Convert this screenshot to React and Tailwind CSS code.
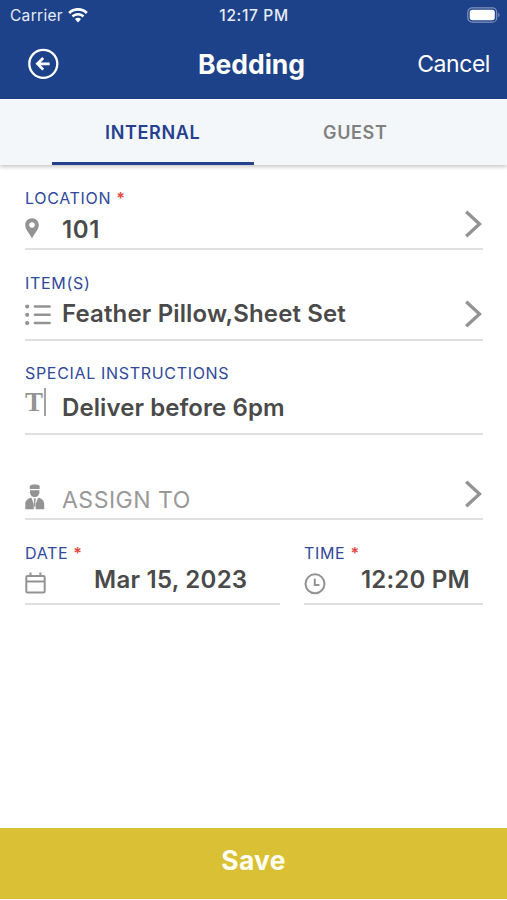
import clsx from 'clsx'

function WifiIcon() {
  return (
    <svg width="20" height="15" viewBox="0 0 20 15" fill="white">
      <path d="M10 0C6.2 0 2.7 1.5 .2 3.9l1.9 2C4.2 4 7 2.8 10 2.8s5.8 1.2 7.9 3.1l1.9-2C17.3 1.5 13.8 0 10 0z" />
      <path d="M10 4.9c-2.5 0-4.7.9-6.4 2.5l1.9 2c1.2-1.1 2.8-1.8 4.5-1.8s3.3.7 4.5 1.8l1.9-2C14.7 5.8 12.5 4.9 10 4.9z" />
      <path d="M10 9.7c-1.2 0-2.2.4-3 1.2l3 3.5 3-3.5c-.8-.8-1.8-1.2-3-1.2z" />
    </svg>
  )
}

function BatteryIcon() {
  return (
    <svg width="34" height="16" viewBox="0 0 34 16">
      <rect x=".8" y=".8" width="28.9" height="14.4" rx="4.5" fill="none" stroke="#8093bc" strokeWidth="1.2" />
      <rect x="2.7" y="2.7" width="25.1" height="10.6" rx="2.8" fill="white" />
      <path d="M31.3 5.8c1.6.6 1.6 3.8 0 4.4z" fill="#8093bc" />
    </svg>
  )
}

function BackIcon() {
  return (
    <svg width="32" height="32" viewBox="0 0 32 32" fill="none" stroke="white" strokeWidth="2.3">
      <circle cx="16.3" cy="15.8" r="14" />
      <path d="M22.6 15.8H10.8M16.2 10l-5.8 5.8 5.8 5.8" strokeWidth="2.7" />
    </svg>
  )
}

function PinIcon() {
  return (
    <svg width="14" height="21" viewBox="0 0 14 21" fill="#939393">
      <path fillRule="evenodd" d="M7 .3C3.2.3.2 3.2.2 7c0 4.8 4.6 8.6 6.8 13.4C9.2 15.6 13.8 11.8 13.8 7 13.800 3.200 10.800.3 7 .3zm0 3.900a2.800 2.800 0 1 1 0 5.600A2.800 2.800 0 0 1 7 4.200z" />
    </svg>
  )
}

function ListIcon() {
  return (
    <svg width="26" height="22" viewBox="0 0 26 22" stroke="#939393" fill="#939393">
      <path d="M9.9 2.500h14.700M9.900 10.800h14.700M9.900 19.100h14.700" strokeWidth="2.500" strokeLinecap="round" />
      <g stroke="none">
        <circle cx="2.200" cy="2.500" r="2.100" />
        <circle cx="2.200" cy="10.800" r="2.100" />
        <circle cx="2.200" cy="19.100" r="2.100" />
      </g>
    </svg>
  )
}

function TextIcon() {
  return (
    <span className="flex h-7 w-[21px] items-center justify-between border-r-2 border-[#a3a3a3] font-['Liberation_Serif',serif] text-[27px] leading-7 font-bold text-[#939393]">
      T
    </span>
  )
}

function PersonIcon() {
  return (
    <svg width="20" height="26" viewBox="0 0 20 26" fill="#939393">
      <path d="M4.800 2.200C4.800.9 7 .4 9.700.4s4.900.5 4.900 1.800v2.900H4.800z" />
      <path d="M5 6.300h9.400v2c0 2.800-2.100 4.800-4.700 4.800S5 11.100 5 8.300z" />
      <path d="M6.400 13.800L8.800 20v5.200H.3v-5.400c0-3 2.300-5.200 6.100-6z" />
      <path d="M13.100 13.800L10.700 20v5.200h8.500v-5.400c0-3-2.300-5.200-6.100-6z" />
      <path d="M8.500 14.600h2.500l-.6 2.600v5.500h-1.300v-5.500z" />
    </svg>
  )
}

function CalendarIcon() {
  return (
    <svg width="22" height="23" viewBox="0 0 22 23" fill="none" stroke="#939393" strokeWidth="2">
      <rect x="1.300" y="3.900" width="18.400" height="16.600" rx="1.300" />
      <path d="M1.300 9.500h18.400M5.500 .5v3.400M15.400 .5v3.400" />
    </svg>
  )
}

function ClockIcon() {
  return (
    <svg width="22" height="22" viewBox="0 0 22 22" fill="none" stroke="#939393" strokeWidth="2">
      <circle cx="11" cy="10.800" r="9.500" />
      <path d="M10.800 5.800v6.100h4.700" />
    </svg>
  )
}

function Chevron({ className }) {
  return (
    <svg width="18" height="28" viewBox="0 0 18 28" fill="none" stroke="#939393" strokeWidth="3.300" className={clsx('ml-auto', className)}>
      <path d="M1.200 1.700L14.500 14 1.200 26.300" />
    </svg>
  )
}

function Label({ text, required }) {
  return (
    <p className="h-5 text-[16px] leading-5 tracking-[0.68px] text-[#30499a]">
      {text}
      {required && <span className="ml-[5px] font-semibold text-[#e04a3f]">*</span>}
    </p>
  )
}

function Value({ children, className }) {
  return <p className={clsx('text-2xl leading-7 font-semibold whitespace-nowrap text-[#4a4a4a]', className)}>{children}</p>
}

function Field({ label, required, icon, iconClass, className, children }) {
  return (
    <div className={clsx('border-b-2 border-[#e0e0e0]', className)}>
      {label && <Label text={label} required={required} />}
      <div className="flex items-start">
        <div className={clsx('w-[37px] shrink-0', iconClass)}>{icon}</div>
        {children}
      </div>
    </div>
  )
}

function App() {
  return (
    <div className="flex h-[900px] w-[507px] flex-col overflow-hidden bg-white font-[Inter,sans-serif]">
      <header className="h-[99px] shrink-0 bg-[#1e4289] text-white">
        <div className="grid h-[30px] grid-cols-3 items-center px-[9px] text-[15.5px] text-[#e7ecf6]">
          <div className="flex items-center gap-[5px] pl-px tracking-[0.3px]">
            <span className="pt-px">Carrier</span>
            <WifiIcon />
          </div>
          <span className="pt-px pl-px text-center font-medium tracking-[0.65px]">12:17 PM</span>
          <div className="-mr-[3px] flex justify-end">
            <BatteryIcon />
          </div>
        </div>
        <div className="grid h-[68px] grid-cols-3 items-center px-[17px]">
          <button className="ml-[10px] w-8">
            <BackIcon />
          </button>
          <h1 className="-ml-1 pt-0.5 text-center text-[26.5px] font-bold">Bedding</h1>
          <button className="text-right text-[23px] tracking-[-0.45px]">Cancel</button>
        </div>
      </header>

      <nav className="flex h-[66px] shrink-0 border-t border-white bg-[#f4f7f9] px-[52px] text-[18px] font-semibold shadow-[0_2px_4px_rgba(0,0,0,0.22)]">
        <button className="w-[202px] border-b-3 border-[#25408f] pt-0.5 tracking-[0.65px] text-[#25408f]">INTERNAL</button>
        <button className="w-[202px] border-b-3 border-transparent pt-0.5 pl-0.5 tracking-[0.65px] text-[#808080]">GUEST</button>
      </nav>

      <main className="flex-1 pt-[23px] pr-6 pl-[25px]">
        <Field label="LOCATION" required icon={<PinIcon />} iconClass="mt-[10px]" className="h-[62px]">
          <Value className="mt-[8px] tracking-[0.6px]">101</Value>
          <Chevron className="mt-0.5" />
        </Field>
        <Field label="ITEM(S)" icon={<ListIcon />} iconClass="mt-[11px]" className="mt-[23px] h-[68px]">
          <Value className="mt-[7px] tracking-[0.14px]">Feather Pillow,Sheet Set</Value>
          <Chevron className="mt-[7px]" />
        </Field>
        <Field label="SPECIAL INSTRUCTIONS" icon={<TextIcon />} iconClass="mt-[5px]" className="mt-[22px] h-[72px]">
          <Value className="mt-[11px] tracking-[0.08px]">Deliver before 6pm</Value>
        </Field>
        <Field icon={<PersonIcon />} iconClass="mt-[4px]" className="mt-[45px] h-10">
          <p className="mt-[6px] text-[23px] leading-7 tracking-[0.5px] text-[#999]">ASSIGN TO</p>
          <Chevron />
        </Field>
        <div className="mt-[23px] flex justify-between">
          <Field label="DATE" required icon={<CalendarIcon />} iconClass="mt-[9px]" className="h-[62px] w-[255px]">
            <Value className="mt-[3px] ml-8 tracking-[0.25px]">Mar 15, 2023</Value>
          </Field>
          <Field label="TIME" required icon={<ClockIcon />} iconClass="mt-[10px]" className="h-[62px] w-[179px]">
            <Value className="mt-[3px] ml-5 tracking-[0.2px]">12:20 PM</Value>
          </Field>
        </div>
      </main>

      <button className="mb-px h-[71px] shrink-0 bg-[#d9c034] pb-[5px] text-[26.5px] font-bold tracking-[0.2px] text-[#fffef2]">Save</button>
    </div>
  )
}

export default App
